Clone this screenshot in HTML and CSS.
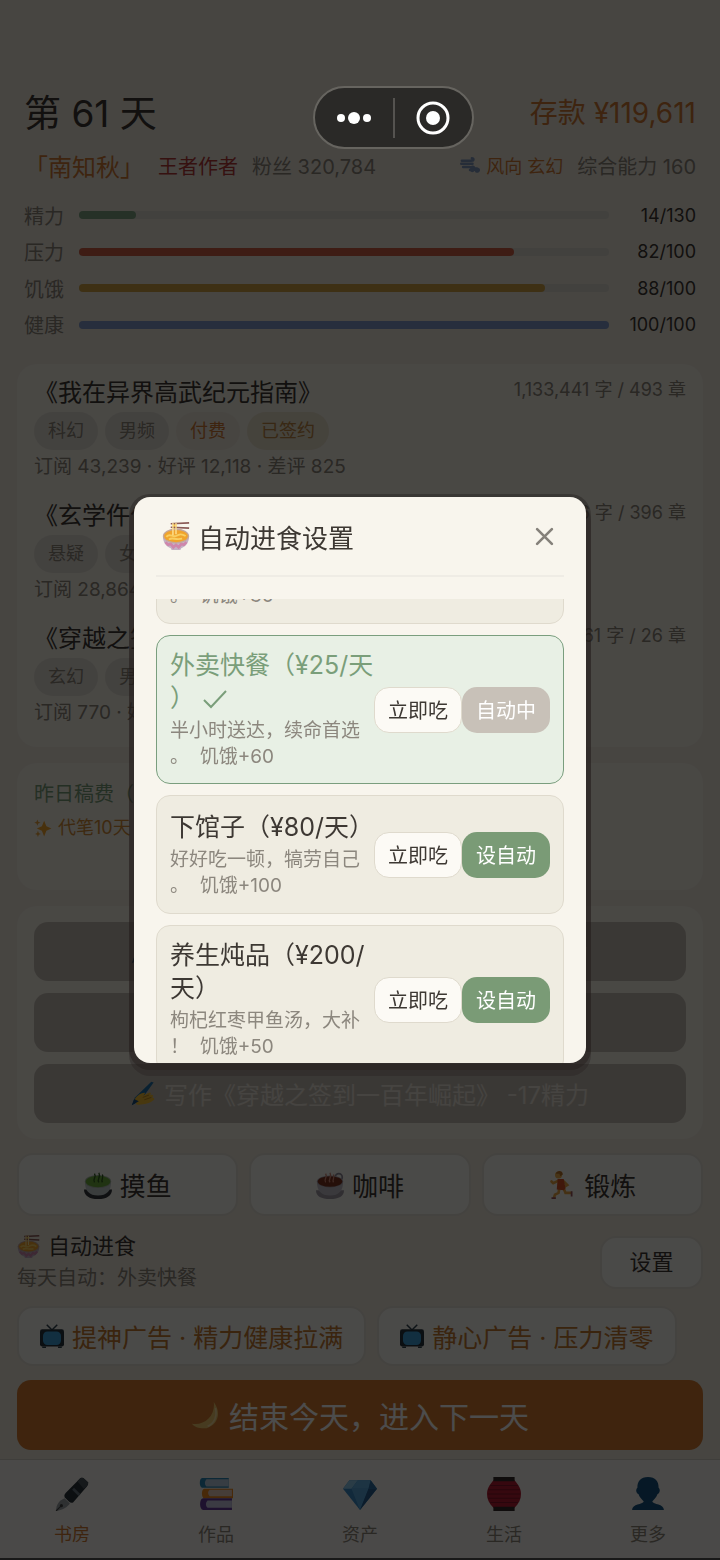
FILE: index.html
```html
<!DOCTYPE html>
<html lang="zh-CN">
  <head>
    <meta charset="utf-8">
    <meta name="viewport" content="width=device-width, initial-scale=1">
    <title>书房</title>
    <link rel="stylesheet" href="styles.css">
  </head>
  <body>
    <!-- Icons -->
    <svg class="sprite" aria-hidden="true">
      <symbol id="i-noodle" viewBox="0 0 32 32">
        <path d="M12 1h5v14h-5z" fill="#f6c453"/>
        <path d="M10 2l21-1M10 6l21 1" stroke="#8b5a56" stroke-width="2"/>
        <path d="M1 16c0 8 4 12 9 14l1 2h10l1-2c5-2 9-6 9-14z" fill="#c3b1c4"/>
        <path d="M4 23l3 3 3-1 3 4 3-3 3 3 3-4 3 1 3-3" fill="none" stroke="#cf86ab" stroke-width="3"/>
        <ellipse cx="16" cy="16" rx="15" ry="8.500" fill="#c4a79b"/>
        <ellipse cx="16" cy="16" rx="13.500" ry="7" fill="#f0a42c"/>
        <path d="M5 17c4-5 7 1 11-1s6-3 11 0M8 20c4-3 7 1 15-1" fill="none" stroke="#f9cf62" stroke-width="2.200"/>
        <path d="M12.500 1v14M16 1v13" stroke="#ffe69a" stroke-width="1.500"/>
      </symbol>
      <symbol id="i-wind" viewBox="0 0 32 32">
        <path d="M3 9h15c5 0 4-4 1-4M2 14h18M5 19h10c4 0 5 5 1 5M18 20c4-4 7 3 3 5s-4-4 2-4 9 3 6 5-5-2-1-4" fill="none" stroke="#8097bd" stroke-width="4" stroke-linecap="round"/>
      </symbol>
      <symbol id="i-spark" viewBox="0 0 32 32">
        <path d="M18 3l4 10 9 4-9 4-4 10-4-10-9-4 9-4z" fill="#f2a52d"/>
        <path d="M6 1l1.500 4 4 1.500-4 1.500L6 12 4.500 8l-4-1.500 4-1.500zM7 21l1.500 4 3.500 1.500-3.500 1.500L7 32l-1.500-4L2 26.500 5.500 25z" fill="#e6a23c"/>
      </symbol>
      <symbol id="i-write" viewBox="0 0 32 32">
        <path d="M1 31l4-10L26 1l3 1-16 22z" fill="#2171a8"/>
        <path d="M4 24c4-6 9-9 13-9 2 0 0 3-2 4l8-4c3-1 3 2 1 3 4-1 6 1 3 3 3 0 4 3 1 4-4 4-15 6-21 5z" fill="#f2bc32"/>
        <path d="M15 21l8-3M17 24l9-3" stroke="#bc8420" stroke-width="1.200"/>
        <path d="M1 31l3-8 6 3z" fill="#1b4f7e"/>
      </symbol>
      <symbol id="i-tea" viewBox="0 0 32 32">
        <path d="M0 21c0 7 6 11 16 11s16-4 16-11z" fill="#33383c"/>
        <path d="M1 12c0 11 5 16 15 16s15-5 15-16z" fill="#c3cbcd"/>
        <ellipse cx="16" cy="12" rx="15" ry="7.500" fill="#a9b8a9"/>
        <ellipse cx="16" cy="12" rx="14" ry="6.500" fill="#6cab3c"/>
        <path d="M12 13c-3-4 3-5 0-10M17 13c-3-4 3-5 0-11M21 13c-2-4 2-5 0-9" fill="none" stroke="#2f5a20" stroke-width="1.500"/>
      </symbol>
      <symbol id="i-coffee" viewBox="0 0 32 32">
        <path d="M0 22c0 7 6 10 16 10s16-3 16-10z" fill="#a09ba6"/>
        <circle cx="26" cy="7" r="4" fill="none" stroke="#8e8a98" stroke-width="2"/>
        <path d="M1 12c0 11 5 16 15 16s15-5 15-16z" fill="#c4c0ca"/>
        <ellipse cx="16" cy="12" rx="15" ry="7" fill="#aaa5b0"/>
        <ellipse cx="16" cy="12" rx="14" ry="6" fill="#7c321e"/>
        <path d="M11 13c-3-4 3-5 0-10M16 13c-3-4 3-5 0-11M20 13c-2-4 2-5 0-9" fill="none" stroke="#cf8775" stroke-width="1.500"/>
      </symbol>
      <symbol id="i-run" viewBox="0 0 32 32">
        <path d="M12 11l-6 3-2-2M18 12l4 4-5 3M13 20l-1 5-4 2-1 3M18 20l2 5h6" fill="none" stroke="#e7a645" stroke-width="3" stroke-linecap="round"/>
        <path d="M11 9l7 0 2 11-2 2-8-1z" fill="#d75227"/>
        <circle cx="12" cy="4.500" r="4" fill="#efb04e"/>
        <path d="M9 3c1-4 8-4 8 1l-3 2-1-3z" fill="#ba7429"/>
        <path d="M4 31h5M27 23v6" stroke="#9b555c" stroke-width="2"/>
      </symbol>
      <symbol id="i-tv" viewBox="0 0 32 32">
        <path d="M9 1l7 7 7-7" fill="none" stroke="#30444f" stroke-width="2"/>
        <rect y="7" width="32" height="23" rx="3" fill="#27343c"/>
        <rect x="4" y="10" width="24" height="18" rx="6" fill="#3c9fd8"/>
        <path d="M3 30h5v2H3zM24 30h5v2h-5z" fill="#30444f"/>
      </symbol>
      <symbol id="i-moon" viewBox="0 0 32 32">
        <path d="M26 1c9 12 5 26-8 30-7 1-14-1-17-5 8 1 14-1 19-6 5-5 7-12 6-19z" fill="#efc76b"/>
        <path d="M28 8c2 9-1 17-9 21" fill="none" stroke="#f7dda0" stroke-width="2"/>
      </symbol>
      <symbol id="i-pen" viewBox="0 0 32 32">
        <path d="M24 1q2-1 4 1l3 3q1 2-1 4L17 24q-2 1-4-1l-4-4q-1-2 1-4z" fill="#2b333a"/>
        <path d="M24 1q2-1 4 1l3 3q1 2-1 4l-3 2-6-7z" fill="#4a545c"/>
        <path d="M17 11l6 6" stroke="#64727d" stroke-width="2.500"/>
        <path d="M9 20l5 5c-2 3-6 6-13 7 0-6 3-10 8-12z" fill="#9aa0a6"/>
        <circle cx="6" cy="27" r="1.500" fill="#444"/>
        <path d="M1 32l5-5" stroke="#444"/>
      </symbol>
      <symbol id="i-books" viewBox="0 0 32 32">
        <path d="M3 1h25v9H3c-3 0-3-9 0-9z" fill="#2985b5"/>
        <path d="M7 2h21v7H7c-2-2-2-5 0-7z" fill="#b9ccdf"/>
        <path d="M5 11h27v9H5c-3 0-3-9 0-9z" fill="#f08b20"/>
        <path d="M10 12h21v6H10c-2-2-2-4 0-6z" fill="#e9cbbd"/>
        <path d="M4 20h27v11H4c-4 0-4-11 0-11z" fill="#673a9b"/>
        <path d="M8 22h23v7H8c-2-2-2-5 0-7z" fill="#c6c5df"/>
      </symbol>
      <symbol id="i-gem" viewBox="0 0 32 32">
        <path d="M6 3h20l6 8-16 20L0 11z" fill="#3989c5"/>
        <path d="M6 3h8l-6 8H0z" fill="#8dc8ec"/>
        <path d="M14 3h12l-2 8H8z" fill="#62afe0"/>
        <path d="M8 11h16l-8 20z" fill="#57a6db"/>
        <path d="M26 3l6 8h-8z" fill="#2c6da2"/>
        <path d="M24 11h8L16 31z" fill="#285f8f"/>
      </symbol>
      <symbol id="i-lantern" viewBox="0 0 32 32">
        <path d="M6 3h20c4 5 6 8 6 13s-2 9-6 13H6c-4-4-6-8-6-13S2 8 6 3z" fill="#b51c32"/>
        <path d="M3 8h26M1 12h30M1 16h30M1 20h30M3 24h26" stroke="#82152a"/>
        <path d="M6 0h20v4H6zM6 28h20v4H6z" fill="#33292a"/>
      </symbol>
      <symbol id="i-user" viewBox="0 0 32 32">
        <path d="M16 0c7 0 10 4 10 10 2 2 1 5-1 6-1 3-3 5-5 7 1 3 11 2 11 8H1c0-6 10-5 11-8-2-2-4-4-5-7-2-1-3-4-1-6C6 4 9 0 16 0z" fill="#17537f"/>
      </symbol>
    </svg>

    <div class="page">
      <main class="main">
        <header class="top">
          <div class="top-row">
            <h1>第 61 天</h1>
            <span class="money">存款 ¥119,611</span>
          </div>
          <div class="info">
            <span class="name">「南知秋」</span>
            <span class="rank">王者作者</span>
            <span>粉丝 320,784</span>
            <span class="trend"><svg><use href="#i-wind"/></svg>风向 玄幻</span>
            <span>综合能力 160</span>
          </div>
          <div class="stats">
            <div class="stat"><span>精力</span><div class="bar"><div class="fill green" style="width:10.7%"></div></div><b>14/130</b></div>
            <div class="stat"><span>压力</span><div class="bar"><div class="fill red" style="width:82%"></div></div><b>82/100</b></div>
            <div class="stat"><span>饥饿</span><div class="bar"><div class="fill gold" style="width:88%"></div></div><b>88/100</b></div>
            <div class="stat"><span>健康</span><div class="bar"><div class="fill blue" style="width:100%"></div></div><b>100/100</b></div>
          </div>
        </header>

        <section class="card books">
          <article class="book">
            <div class="book-head"><h2>《我在异界高武纪元指南》</h2><span>1,133,441 字 / 493 章</span></div>
            <div class="tags"><span>科幻</span><span>男频</span><span class="paid">付费</span><span class="signed">已签约</span></div>
            <p>订阅 43,239 · 好评 12,118 · 差评 825</p>
          </article>
          <article class="book">
            <div class="book-head"><h2>《玄学仵作》</h2><span>812,096 字 / 396 章</span></div>
            <div class="tags"><span>悬疑</span><span>女频</span></div>
            <p>订阅 28,864 · 好评 9,203</p>
          </article>
          <article class="book">
            <div class="book-head"><h2>《穿越之签到一百年崛起》</h2><span>60,561 字 / 26 章</span></div>
            <div class="tags"><span>玄幻</span><span>男频</span></div>
            <p>订阅 770 · 好评 215</p>
          </article>
        </section>

        <section class="card income">
          <p>昨日稿费（3本）</p>
          <p class="ghost"><svg><use href="#i-spark"/></svg>代笔10天</p>
        </section>

        <section class="card writing">
          <button disabled><svg><use href="#i-write"/></svg>写作《我在异界高武纪元指南》 -17精力</button>
          <button disabled><svg><use href="#i-write"/></svg>写作《玄学仵作》 -17精力</button>
          <button disabled><svg><use href="#i-write"/></svg>写作《穿越之签到一百年崛起》 -17精力</button>
        </section>

        <div class="actions">
          <button class="btn"><svg><use href="#i-tea"/></svg>摸鱼</button>
          <button class="btn"><svg><use href="#i-coffee"/></svg>咖啡</button>
          <button class="btn"><svg><use href="#i-run"/></svg>锻炼</button>
        </div>

        <div class="auto">
          <div>
            <p class="auto-title"><svg><use href="#i-noodle"/></svg>自动进食</p>
            <p class="auto-sub">每天自动：外卖快餐</p>
          </div>
          <button class="btn">设置</button>
        </div>

        <div class="ads">
          <button class="btn"><svg><use href="#i-tv"/></svg>提神广告 · 精力健康拉满</button>
          <button class="btn"><svg><use href="#i-tv"/></svg>静心广告 · 压力清零</button>
        </div>

        <button class="end"><svg><use href="#i-moon"/></svg>结束今天，进入下一天</button>
      </main>

      <nav class="nav">
        <a href="#study" class="active"><svg><use href="#i-pen"/></svg>书房</a>
        <a href="#works"><svg><use href="#i-books"/></svg>作品</a>
        <a href="#assets"><svg><use href="#i-gem"/></svg>资产</a>
        <a href="#life"><svg><use href="#i-lantern"/></svg>生活</a>
        <a href="#more"><svg><use href="#i-user"/></svg>更多</a>
      </nav>
    </div>

    <!-- The Modal -->
    <div class="mask">
      <div class="modal" role="dialog" aria-labelledby="modal-title">
        <div class="modal-head">
          <h2 id="modal-title"><svg><use href="#i-noodle"/></svg>自动进食设置</h2>
          <button class="close" aria-label="关闭"><svg viewBox="0 0 18 18"><path d="M2 2l14 14M16 2L2 16"/></svg></button>
        </div>
        <div class="meals" id="meals">
          <div class="meal">
            <div class="meal-text"><h3>泡面（¥10/天）</h3><p>宿舍常备，三分钟搞定。&nbsp; 饥饿+30</p></div>
            <button class="eat">立即吃</button><button class="set">设自动</button>
          </div>
          <div class="meal on">
            <div class="meal-text"><h3>外卖快餐（¥25/天）<svg class="check" viewBox="0 0 24 20"><path d="M1 11l7 7L23 2"/></svg></h3><p>半小时送达，续命首选。&nbsp; 饥饿+60</p></div>
            <button class="eat">立即吃</button><button class="set" disabled>自动中</button>
          </div>
          <div class="meal">
            <div class="meal-text"><h3>下馆子（¥80/天）</h3><p>好好吃一顿，犒劳自己。&nbsp; 饥饿+100</p></div>
            <button class="eat">立即吃</button><button class="set">设自动</button>
          </div>
          <div class="meal">
            <div class="meal-text"><h3>养生炖品（¥200/天）</h3><p>枸杞红枣甲鱼汤，大补！&nbsp; 饥饿+50</p></div>
            <button class="eat">立即吃</button><button class="set">设自动</button>
          </div>
        </div>
      </div>
    </div>

    <div class="capsule">
      <button aria-label="菜单"><svg width="36" height="14" viewBox="0 0 36 14"><circle cx="5" cy="7" r="4"/><circle cx="18" cy="7" r="6"/><circle cx="31" cy="7" r="4"/></svg></button>
      <button aria-label="退出"><svg width="34" height="34" viewBox="0 0 34 34"><circle cx="17" cy="17" r="15" class="ring"/><circle cx="17" cy="17" r="7"/></svg></button>
    </div>

    <script>
      document.getElementById('meals').scrollTop = 94;
    </script>
  </body>
</html>
```

FILE: styles.css
```css
* { box-sizing: border-box; }

body {
  margin: 0;
  background: #ede7db;
  color: #3d3833;
  font-family: Inter, "Noto Sans CJK SC", sans-serif;
  font-size: 20px;
}

h1, h2, h3, p { margin: 0; font-weight: 400; }
button { font: inherit; color: inherit; border: none; padding: 0; cursor: pointer; white-space: nowrap; }
.sprite { position: absolute; width: 0; height: 0; }

.page { min-height: 100vh; display: flex; flex-direction: column; }
.main { flex: 1; padding: 86px 17px 8px; }

/* Header */
.top { padding: 0 7px; }
.top-row { display: flex; justify-content: space-between; align-items: center; height: 50px; }
.top h1 { font-size: 37px; }
.money { font-size: 28px; color: #d07a35; }
.info { display: flex; align-items: center; gap: 14px; height: 32px; margin-top: 13px; color: #8c857b; white-space: nowrap; }
.name { font-size: 24px; color: #d07a35; }
.rank { color: #b53a38; }
.trend { display: flex; align-items: center; gap: 6px; margin-left: auto; font-size: 18px; color: #d07a35; }
.trend svg { width: 20px; height: 20px; }

.stats { display: grid; grid-template-rows: repeat(4, 1fr); height: 146px; margin-top: 16px; }
.stat { display: grid; grid-template-columns: 40px 1fr 72px; gap: 15px; align-items: center; color: #8c857b; }
.stat b { font-size: 18px; font-weight: 400; color: #3d3833; text-align: right; }
.bar { height: 8px; border-radius: 4px; background: #dcd9d0; }
.fill { height: 8px; border-radius: 4px; }
.green { background: #7fa682; }
.red { background: #d05f45; }
.gold { background: #d1a145; }
.blue { background: #8299cc; }

/* Cards */
.card { background: #f4f0e5; border-radius: 20px; padding: 0 17px; }
.books { margin-top: 21px; padding-top: 14px; }
.book { padding-bottom: 21px; }
.book-head { display: flex; justify-content: space-between; line-height: 24px; font-size: 18px; color: #8c857b; }
.book-head h2 { font-size: 24px; line-height: 30px; color: #3d3833; }
.tags { display: flex; gap: 7px; margin: 4px 0; }
.tags span { padding: 0 14px; border-radius: 19px; background: #e2ddd2; color: #8c857b; font-size: 18px; line-height: 38px; }
.tags .paid { background: #efe7da; color: #d07a35; }
.tags .signed { background: #e8dfc9; color: #bc8543; }
.book p { font-size: 19px; line-height: 26px; color: #8c857b; }

.income { margin-top: 16px; padding-top: 16px; height: 127px; color: #7a9e7a; line-height: 30px; }
.ghost { display: flex; align-items: center; gap: 6px; margin-top: 4px; font-size: 18px; color: #cf8b36; }
.ghost svg { width: 18px; height: 18px; }

.writing { display: flex; flex-direction: column; gap: 12px; margin-top: 16px; padding-top: 16px; padding-bottom: 16px; }
.writing button { display: flex; justify-content: center; align-items: center; gap: 8px; height: 59px; border-radius: 14px; background: #c4bdb3; color: #e9e3da; font-size: 24px; }
.writing svg { width: 25px; height: 25px; }

/* Buttons */
.btn { display: flex; justify-content: center; align-items: center; gap: 8px; border: 2px solid #e5e0d6; border-radius: 16px; background: #f9f7f1; }
.actions { display: grid; grid-template-columns: repeat(3, 1fr); gap: 11px; margin-top: 14px; }
.actions .btn { height: 63px; font-size: 26px; }
.actions svg { width: 28px; height: 28px; }

.auto { display: flex; justify-content: space-between; align-items: center; margin-top: 14px; line-height: 32px; }
.auto-title { display: flex; align-items: center; gap: 8px; font-size: 22px; }
.auto-title svg { width: 23px; height: 23px; }
.auto-sub { color: #8c857b; }
.auto .btn { width: 103px; height: 53px; font-size: 22px; }

.ads { display: flex; gap: 11px; margin-top: 12px; }
.ads .btn { height: 60px; padding: 0 21px; font-size: 25px; color: #c1782f; }
.ads svg { width: 24px; height: 24px; }

.end { display: flex; justify-content: center; align-items: center; gap: 10px; width: 100%; height: 70px; margin-top: 14px; border-radius: 14px; background: #d27a30; color: #fff; font-size: 30px; }
.end svg { width: 28px; height: 28px; }

/* Tab bar */
.nav { display: grid; grid-template-columns: repeat(5, 1fr); height: 101px; border-top: 1px solid #d4cfc5; border-bottom: 2px solid #555; background: #f8f6f0; }
.nav a { display: flex; flex-direction: column; align-items: center; gap: 11px; padding-top: 17px; color: #8c857b; font-size: 18px; line-height: 26px; text-decoration: none; }
.nav .active { color: #d07a35; }
.nav svg { width: 34px; height: 34px; }

/* The Modal (background) */
.mask { position: fixed; inset: 0; display: flex; justify-content: center; align-items: center; background: rgba(0,0,0,0.7); }

.modal {
  display: flex;
  flex-direction: column;
  width: 90%;
  max-width: 452px;
  height: 566px;
  padding: 0 22px;
  border-radius: 16px;
  background: #f8f5ed;
  box-shadow: 0 2px 0 5px rgba(32,27,25,0.4), 0 8px 0 5px rgba(32,27,25,0.3);
}
.modal-head { display: flex; justify-content: space-between; align-items: center; height: 80px; border-bottom: 2px solid #efece5; padding: 0 10px 0 6px; }
.modal-head h2 { display: flex; align-items: center; gap: 8px; font-size: 26px; }
.modal-head h2 svg { width: 28px; height: 28px; }
.close { display: flex; background: none; }
.close svg { width: 19px; height: 19px; fill: none; stroke: #85817a; stroke-width: 2.5; stroke-linecap: round; }

.meals { display: flex; flex-direction: column; gap: 11px; flex: 1; min-height: 0; margin-top: 22px; overflow-y: auto; scrollbar-width: none; }
.meal { display: flex; align-items: center; flex-shrink: 0; min-height: 119px; padding: 13px; border: 1px solid #dfdacd; border-radius: 14px; background: #efece1; }
.meal-text { flex: 1; line-break: anywhere; }
.meal h3 { font-size: 25px; line-height: 33px; }
.meal p { margin-top: 3px; font-size: 19px; line-height: 26px; color: #8c877e; }
.meal.on { border-color: #7a9e7e; background: #e8f0e5; }
.on h3 { color: #7a9e7a; }
.check { width: 24px; height: 20px; margin-left: 8px; fill: none; stroke: #7a9e7a; stroke-width: 2; vertical-align: -2px; }

.eat, .set { width: 88px; height: 46px; border-radius: 15px; }
.eat { border: 1px solid #dfdacd; background: #fcfaf5; }
.set { background: #7a9b76; color: #fff; }
.set:disabled { background: #c8c1b8; }

/* Floating capsule */
.capsule { position: fixed; top: 86px; left: 50%; margin-left: -47px; display: flex; align-items: center; width: 161px; height: 63px; border: 2px solid #66645f; border-radius: 32px; background: #2a2927; }
.capsule button { flex: 1; display: flex; justify-content: center; align-items: center; height: 40px; background: none; }
.capsule button + button { border-left: 2px solid #555350; }
.capsule svg { fill: #fff; }
.capsule .ring { fill: none; stroke: #fff; stroke-width: 3; }
```
